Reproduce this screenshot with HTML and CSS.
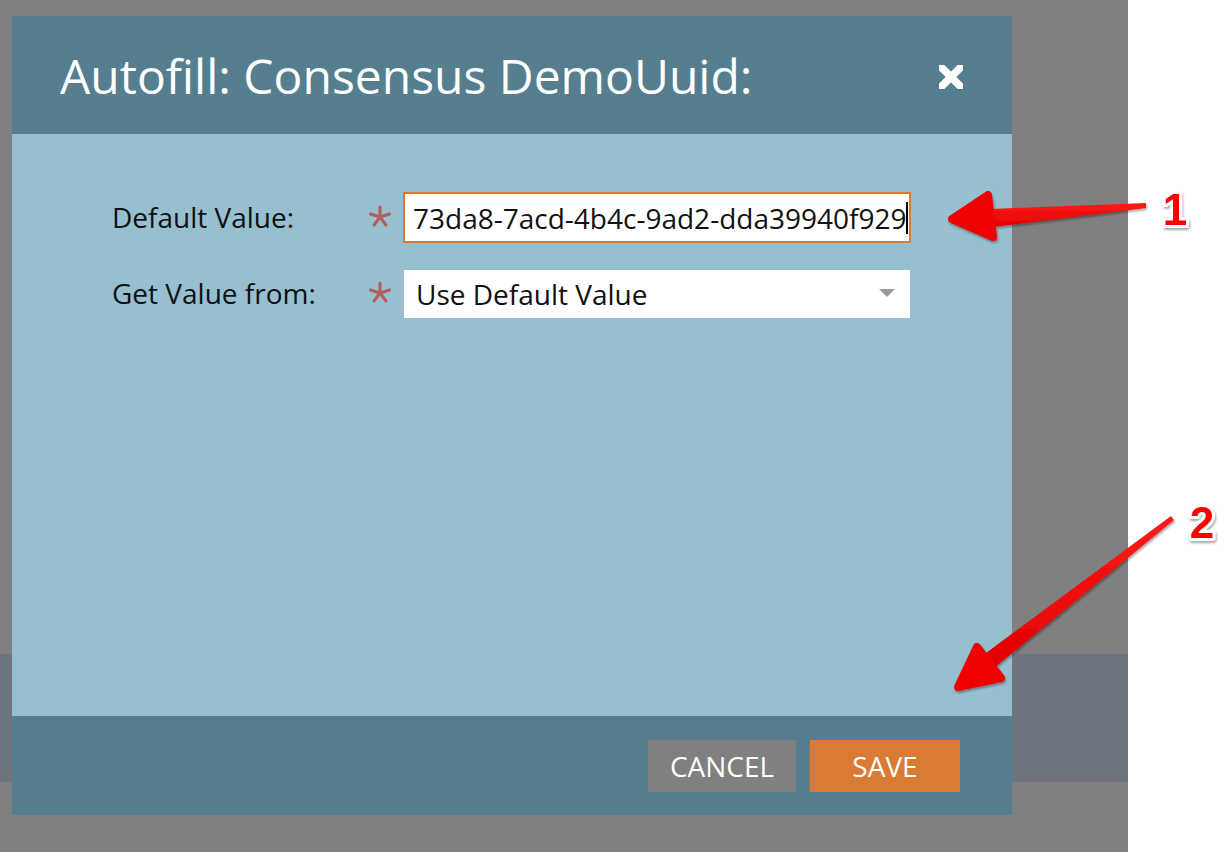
FILE: index.html
```html
<!DOCTYPE html>
<html lang="en">
<head>
<meta charset="utf-8">
<title>Autofill: Consensus DemoUuid</title>
<link rel="stylesheet" href="styles.css">
</head>
<body>
<div class="page">
  <div class="stage">
    <div class="modal">
      <div class="modal-header">
        <h1 class="modal-title">Autofill: Consensus DemoUuid:</h1>
        <button class="close-btn" aria-label="Close">
          <svg width="32" height="32" viewBox="0 0 32 32">
            <defs><filter id="soft"><feGaussianBlur stdDeviation="0.7"/></filter></defs>
            <path d="M6 6 L26 26 M26 6 L6 26" stroke="#fff" stroke-width="7.5" stroke-linecap="round" fill="none" filter="url(#soft)"/>
          </svg>
        </button>
      </div>
      <div class="modal-body">
        <div class="form-grid">
          <label class="form-label row1">Default Value:</label>
          <span class="req row1">
            <svg width="24" height="24" viewBox="0 0 24 24"><g stroke="#b55d5d" stroke-width="3" stroke-linecap="round"><path d="M12 12 L12 2"/><path d="M12 12 L2.5 9"/><path d="M12 12 L21.5 9"/><path d="M12 12 L6 20"/><path d="M12 12 L18 20"/></g></svg>
          </span>
          <div class="text-input row1"><span class="input-text">73da8-7acd-4b4c-9ad2-dda39940f929</span><span class="caret"></span></div>

          <label class="form-label row2">Get Value from:</label>
          <span class="req row2">
            <svg width="24" height="24" viewBox="0 0 24 24"><g stroke="#b55d5d" stroke-width="3" stroke-linecap="round"><path d="M12 12 L12 2"/><path d="M12 12 L2.5 9"/><path d="M12 12 L21.5 9"/><path d="M12 12 L6 20"/><path d="M12 12 L18 20"/></g></svg>
          </span>
          <div class="select row2"><span>Use Default Value</span><span class="select-arrow"></span></div>
        </div>
      </div>
      <div class="modal-footer">
        <button class="btn btn-cancel">CANCEL</button>
        <button class="btn btn-save">SAVE</button>
      </div>
    </div>
  </div>
  <div class="margin-white"></div>
</div>

<svg class="annotations" width="1224" height="852" viewBox="0 0 1224 852">
  <defs>
    <linearGradient id="redg" x1="0" y1="0" x2="0" y2="1">
      <stop offset="0" stop-color="#ff1a1a"/>
      <stop offset="1" stop-color="#e00000"/>
    </linearGradient>
    <filter id="shadow" x="-20%" y="-20%" width="140%" height="140%">
      <feDropShadow dx="1" dy="2" stdDeviation="1" flood-color="#000" flood-opacity="0.35"/>
    </filter>
  </defs>
  <g filter="url(#shadow)">
    <!-- arrow 1 -->
    <polygon points="1146,203 1146,208 993,227 991,209" fill="url(#redg)"/>
    <path d="M952,219 L988,195 L993,237 Z" fill="#f00000" stroke="#f00000" stroke-width="8" stroke-linejoin="round"/>
    <!-- arrow 2 -->
    <polygon points="1171,516 1174,520 994,668 982,656" fill="url(#redg)"/>
    <path d="M958,687 L977,647 L1001,678 Z" fill="#f00000" stroke="#f00000" stroke-width="8" stroke-linejoin="round"/>
  </g>
  <g class="num" filter="url(#shadow)">
    <text x="1175" y="225" text-anchor="middle">1</text>
    <text x="1202" y="538" text-anchor="middle">2</text>
  </g>
</svg>
</body>
</html>
```

FILE: styles.css
```css
* { box-sizing: border-box; }
html, body { margin: 0; padding: 0; }
body {
  width: 1224px;
  height: 852px;
  overflow: hidden;
  font-family: "Open Sans", "Liberation Sans", sans-serif;
  background: #ffffff;
  position: relative;
}
.page {
  display: flex;
  width: 1224px;
  height: 852px;
}
.stage {
  width: 1128px;
  height: 852px;
  background: linear-gradient(to bottom, #808080 0, #808080 654px, #6e757e 654px, #6e757e 782px, #808080 782px);
  padding: 16px 0 0 12px;
}
.margin-white { flex: 1; background: #fff; }

.modal {
  width: 1000px;
  display: flex;
  flex-direction: column;
}
.modal-header {
  height: 118px;
  background: #557e8f;
  display: flex;
  align-items: center;
  padding: 0 45px 0 48px;
}
.modal-title {
  flex: 1;
  margin: 0;
  font-weight: 400;
  font-size: 48px;
  color: #fff;
  line-height: 1;
  padding-top: 2px;
}
.close-btn {
  background: none;
  border: 0;
  padding: 0;
  width: 32px;
  height: 32px;
  display: flex;
  margin-top: 4px;
}
.modal-body {
  height: 582px;
  background: #96bfcf;
  padding: 58px 0 0 100px;
}
.form-grid {
  display: grid;
  grid-template-columns: 256px 35px 508px;
  grid-template-rows: 51px 48px;
  row-gap: 27px;
  align-items: center;
}
.form-label {
  font-size: 28px;
  color: #111;
  line-height: 1;
  padding-bottom: 2px;
}
.req { display: flex; align-items: center; height: 24px; margin-top: -2px; }
.text-input {
  height: 51px;
  background: #fff;
  border: 2px solid #d97b35;
  display: flex;
  align-items: center;
  padding-left: 8px;
  overflow: hidden;
  white-space: nowrap;
}
.input-text {
  font-size: 28px;
  color: #111;
}
.caret {
  display: inline-block;
  width: 2px;
  height: 32px;
  background: #000;
  margin-left: 0;
}
.select {
  height: 48px;
  margin-left: 1px;
  width: 506px;
  background: #fff;
  display: flex;
  align-items: center;
  justify-content: space-between;
  padding: 0 15px 0 12px;
  font-size: 28px;
  color: #111;
}
.select-arrow {
  width: 0;
  height: 0;
  border-left: 8px solid transparent;
  border-right: 8px solid transparent;
  border-top: 8px solid #999;
  margin-top: -2px;
}
.modal-footer {
  height: 99px;
  background: #557e8f;
  display: flex;
  justify-content: flex-end;
  align-items: flex-start;
  gap: 14px;
  padding: 24px 52px 0 0;
}
.btn {
  height: 52px;
  border: 0;
  color: #fff;
  font-family: "Open Sans", "Liberation Sans", sans-serif;
  font-size: 28px;
  padding: 0;
  line-height: 52px;
}
.btn-cancel { width: 148px; background: #808080; }
.btn-save { width: 150px; background: #d97b35; }

.annotations {
  position: absolute;
  left: 0;
  top: 0;
  pointer-events: none;
}
.num text {
  font-family: "Liberation Sans", Arial, sans-serif;
  font-weight: 700;
  font-size: 44px;
  fill: #ff0000;
  stroke: #ffffff;
  stroke-width: 6px;
  paint-order: stroke;
  stroke-linejoin: round;
}
```
